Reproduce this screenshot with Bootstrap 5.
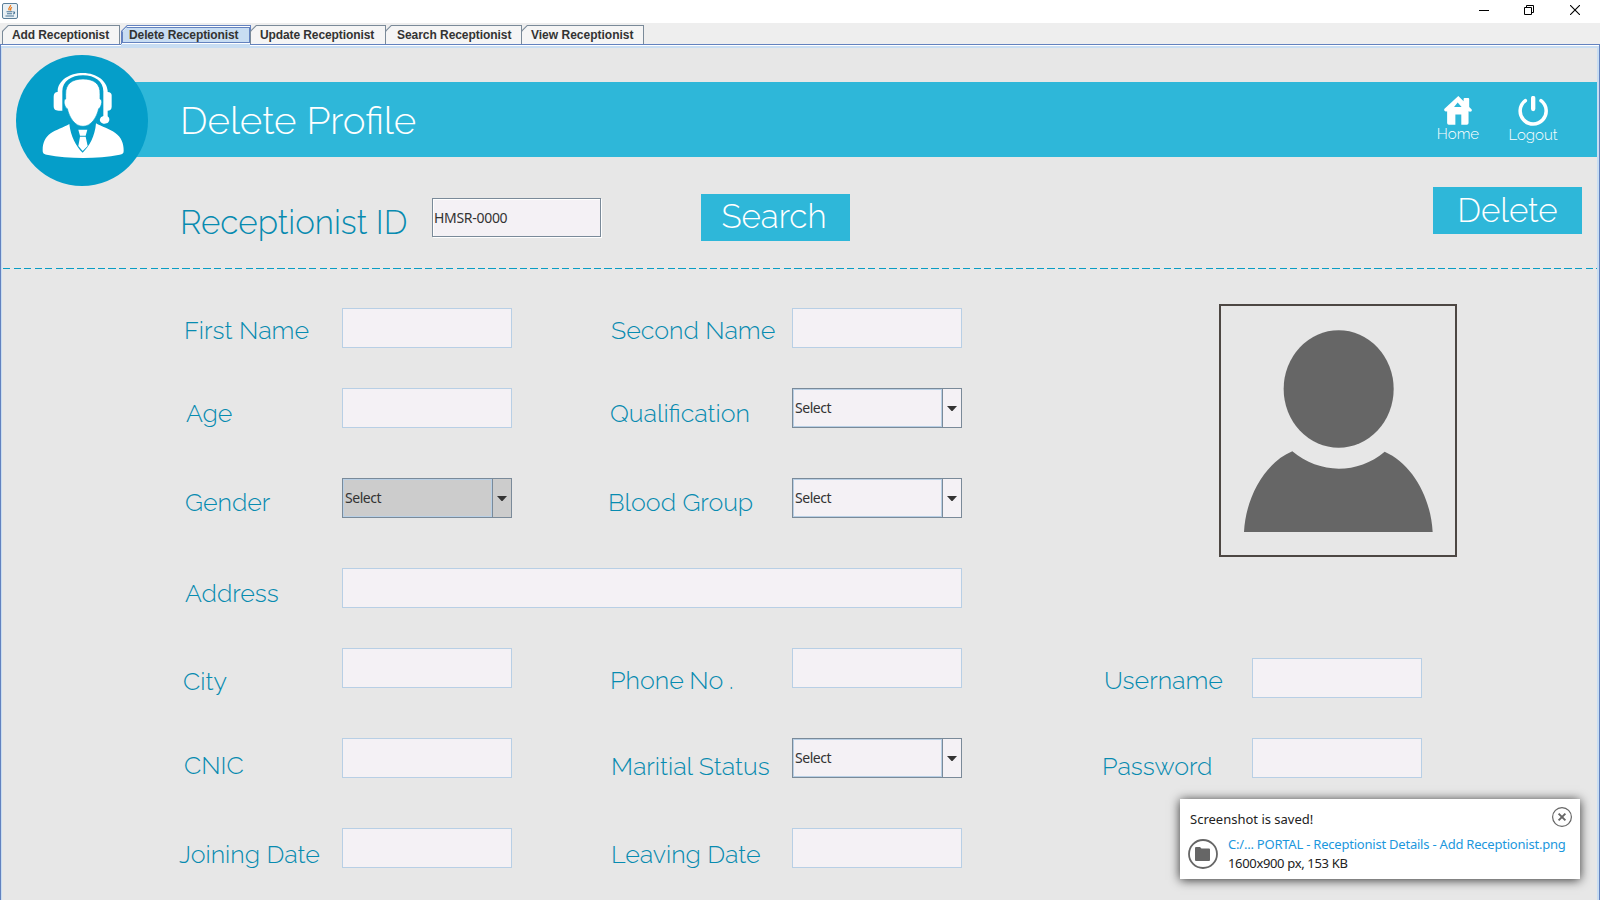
<!DOCTYPE html>
<html lang="en">
<head>
<meta charset="utf-8">
<title>Delete Receptionist</title>
<meta name="viewport" content="width=device-width, initial-scale=1">
<link rel="stylesheet" href="https://cdn.jsdelivr.net/npm/bootstrap@5.3.0/dist/css/bootstrap.min.css">
<style>
:root{--line:#6382bf;--pale:#c8ddf2;--steel:#7a8a99;--teal:#2eb7d9;--ink:#078bb0}
body{width:1600px;height:900px;overflow:hidden;background:#eee;font-family:"Noto Sans",sans-serif;color:#333}
.titlebar{height:23px;background:#fff;padding:3px 0 0 2px}
.winbtns{gap:35px;padding:2px 20px 0 0}
.winbtns svg,.titlebar svg{display:block}
.winbtns .x{margin-left:1px}

/* tab strip */
.tabstrip{height:21px;padding:2px 0 0 2px;flex-wrap:nowrap;border:0}
.tabstrip .nav-link{position:relative;height:19px;margin:0 -1px 0 0;border:0;border-radius:0;padding:0 0 0 10px;font:700 12px/20px "Liberation Sans",Arial,sans-serif;color:#333;white-space:nowrap;background:var(--steel);clip-path:polygon(0 6px,6px 0,100% 0,100% 100%,0 100%);isolation:isolate;letter-spacing:-.1px}
.tabstrip .nav-link::before{content:"";position:absolute;inset:1px 1px 0 1px;background:#f5f5f5;clip-path:polygon(0 5.5px,5.5px 0,100% 0,100% 100%,0 100%);z-index:-1}
.tabstrip .t-add{width:118px}
.tabstrip .t-del{width:130px;margin-left:2px;padding-left:8px}
.tabstrip .t-upd{width:136px}
.tabstrip .t-sea{width:137px;padding-left:12px;letter-spacing:-.05px}
.tabstrip .t-vie{width:123px;letter-spacing:0}
.tabstrip .nav-link.active{background:var(--line);color:#333}
.tabstrip .nav-link.active::before{background:#fff}
.tabstrip .nav-link.active::after{content:"";position:absolute;inset:2px 1px 1px 1px;border:1px solid var(--line);background:var(--pale);clip-path:polygon(0 5px,5px 0,100% 0,100% 100%,0 100%);z-index:-1}

/* tab content frame */
.frame{position:relative;height:856px;background:#e7e7e7;border-left:1px solid var(--line);border-top:1px solid var(--line);border-right:1px solid var(--line);box-shadow:inset 0 1px 0 #fff,inset 1px 3px 0 var(--pale),inset -2px 0 0 var(--pale);padding:3px 2px 0 1px}
.frame .joint{position:absolute;left:120px;top:-1px;width:129px;height:3px;background:var(--pale)}

.band{height:75px;margin:34px 0 0 80px;background:var(--teal);padding:0 39px 0 98px}
.agent{position:absolute;left:15px;top:10px}
.thin{font-family:Raleway,Lato,sans-serif;font-weight:300;white-space:nowrap}
.band h1{font-size:38.5px;line-height:78px;color:#fff}
.tool{color:#fff;font-size:15px;line-height:18px;padding-top:14px;text-decoration:none}
.tool:hover{color:#fff}
.tool svg{display:block;margin:0 auto}
.tool.home{width:44px;margin-right:28px}
.tool.out{width:50px}

.lookup{height:111px;padding-left:178px}
.lookup .rid{width:252px;margin-top:46px;font-size:33.2px;line-height:40px;color:var(--ink)}
.lookup input{width:169px;height:39px;margin:41px 100px 0 0;border:1px solid var(--steel);border-radius:0;padding:0 0 0 1px;background:#f4f1f5;font-size:14px;letter-spacing:-.3px;color:#333;box-shadow:1px 1px 0 #fff,inset 1px 1px 0 #fff}
.cmd{border:0;border-radius:0;padding:0;height:47px;width:149px;background:var(--teal);color:#fff;font-size:33.2px;display:block;text-align:center}
.cmd.go{margin-top:37px;line-height:40px;padding:0 3px 2px 0}
.cmd.del{margin:30px 15px 0 auto;line-height:47px}
.dashes{height:1px;margin-left:1px;background:repeating-linear-gradient(90deg,#0a9dc4 0 7.3px,transparent 7.3px 10.55px)}

/* profile form */
.profile{margin:39px 0 0 177px;grid-template-columns:163px 170px 97px 183px 170px 139px 151px 170px;grid-template-rows:80px 90px 90px 80px 90px 90px 62px;align-items:start}
.profile label{font-size:25px;line-height:28px;color:var(--ink)}
.profile input,.pick{height:40px;border-radius:0;background:#f4f1f5;border:1px solid #b8cfe5;padding:0}
.profile .drop{margin-top:10px}
.pick{border-color:var(--steel);display:flex;font-size:14px;line-height:37px;letter-spacing:-.45px}
.pick .val{width:149px;padding-left:1px;border:1px solid #b8cfe5;line-height:36px;box-shadow:1px 0 0 var(--steel)}
.pick svg{display:block;margin:17px 0 0 5px}
.pick.dim{background:#ccc}
.c1{grid-column:1}.c2{grid-column:2}.c4{grid-column:4}.c5{grid-column:5}.c7{grid-column:7}.c8{grid-column:8}
.wide{grid-column:2/6}
.r1{grid-row:1}.r2{grid-row:2}.r3{grid-row:3}.r4{grid-row:4}.r5{grid-row:5}.r6{grid-row:6}.r7{grid-row:7}
.photo{grid-column:7/9;grid-row:1/4;width:238px;height:253px;margin:-4px 0 0 118px;border:2px solid #4d4743}
#l-first{margin:8px 0 0 5px}
#l-age{margin:11px 0 0 7px}
#l-gender{margin:10px 0 0 6px}
#l-address{margin:11px 0 0 6px}
#l-city{margin:19px 0 0 4px}
#l-cnic{margin:13px 0 0 5px}
#l-join{margin:12px 0 0 0}
#l-second{margin:8px 0 0 2px}
#l-qual{margin:11px 0 0 1px}
#l-blood{margin:10px 0 0 -1px}
#l-phone{margin:18px 0 0 1px;word-spacing:-.8px}
#l-marital{margin:14px 0 0 2px}
#l-leave{margin:12px 0 0 2px}
#l-user{margin:18px 0 0 3px}
#l-pass{margin:14px 0 0 1px}

/* saved-file notice */
.notice{position:absolute;left:1180px;top:799px;width:400px;height:80px;background:#fff;box-shadow:0 1px 10px rgba(0,0,0,.8);font-size:13px;line-height:19px;color:#222;padding:11px 8px 0 10px}
.notice .shut{margin:-3px 0 0}
.notice .dir{margin:2px 10px 0 -2px}
.notice .lines{margin-top:-2px}
.notice a{color:#1c97dd;text-decoration:none;letter-spacing:-.22px;white-space:nowrap}
.notice .meta{letter-spacing:-.34px}
</style>
</head>
<body>
<header class="titlebar d-flex justify-content-between align-items-start">
  <svg width="16" height="16" viewBox="0 0 16 16"><rect x=".5" y=".5" width="15" height="15" rx="1.5" fill="#e9f0f4" stroke="#5b7f99"/><path d="M8.6 2c.6 1.8-3.4 2.6-1.2 5.4M10 4.2C8 5.2 8.3 6 8.8 7.6" fill="none" stroke="#ea7a1c" stroke-width="1.2"/><path d="M4.5 8.8h6M5 10.7h5M3.5 13h8.5M11 9c2.2-.4 2 1.5 0 2" fill="none" stroke="#4a7697" stroke-width="1.1"/></svg>
  <div class="winbtns d-flex" aria-hidden="true">
    <svg width="10" height="10"><path d="M0 5.5h10" stroke="#000"/></svg>
    <svg width="10" height="10" fill="none" stroke="#000"><path d="M.5 2.5h7v7h-7zM2.5 2V.5h7v7H8"/></svg>
    <svg class="x" width="10" height="10" fill="none" stroke="#000" stroke-width="1.1"><path d="M0 0l10 10M10 0L0 10"/></svg>
  </div>
</header>
<nav class="nav nav-tabs tabstrip">
  <a class="nav-link t-add">Add Receptionist</a>
  <a class="nav-link active t-del">Delete Receptionist</a>
  <a class="nav-link t-upd">Update Receptionist</a>
  <a class="nav-link t-sea">Search Receptionist</a>
  <a class="nav-link t-vie">View Receptionist</a>
</nav>
<main class="frame">
  <span class="joint"></span>
  <div class="band d-flex">
    <h1 class="thin m-0 me-auto">Delete Profile</h1>
    <a class="tool home thin text-center" href="#"><svg width="28" height="29" viewBox="132 288 84 88"><path fill="#fff" fill-rule="evenodd" d="M175 288l16 16v-7q0-3 3-3h11q3 0 3 3v24l7 7q2 3 0 6-4 3-9 0v36q0 5-5 5h-17v-31h-18v31h-20q-5 0-5-5v-36q-5 3-8-1-2-3 0-6zM173 308l-11 13h23z"/></svg>Home</a>
    <a class="tool out thin text-center" href="#"><svg width="30" height="30" viewBox="354 288 90 90" fill="none" stroke="#fff" stroke-linecap="round"><path d="M376 302A39 39 0 1 0 423 302" stroke-width="10.5"/><path d="M399.5 294v33" stroke-width="13"/></svg>Logout</a>
  </div>
  <svg class="agent" width="132" height="131" viewBox="48 105 396 393">
    <ellipse cx="246" cy="301.5" rx="198" ry="196.5" fill="#059ec9"/>
    <g fill="#fff">
      <path d="M173 216v-4c2-30 34-53 76-53s72 25 74 53v4c8 0 12 4 12 10v34c0 8-5 12-12 12v17c6 4 7 12 2 18-6 6-18 6-23-1-5-6-2-15 8-18v-74c0-30-26-48-61-48s-62 18-62 48v58h-11c-11 0-15-5-15-14v-28c0-9 4-14 12-14z"/>
      <path d="M249 177c32 0 53 14 51 46v14c6 1 6 10 4 16-2 8-5 12-8 13-6 26-22 53-47 53s-41-27-47-53c-4-1-7-7-9-15-1-6-1-13 4-14v-14c-1-32 20-46 52-46z" stroke="#059ec9" stroke-width="2"/>
      <path d="M208 312c4 36 20 68 40 86 20-18 37-50 40-88 16 9 42 18 58 29 18 13 25 31 25 53 0 8-3 10-12 12-68 13-151 13-219 0-10-2-12-5-12-14 0-22 8-38 24-50 15-11 40-18 56-28z"/>
      <path d="M235 329h27l-5 18h-17zM240 350h17l6 28-15 15-13-15z"/>
    </g>
  </svg>

  <div class="lookup d-flex align-items-start">
    <label class="rid thin" for="rid">Receptionist ID</label>
    <input id="rid" class="form-control flex-shrink-0" value="HMSR-0000">
    <button class="cmd go thin">Search</button>
    <button class="cmd del thin">Delete</button>
  </div>
  <div class="dashes"></div>

  <form class="profile d-grid">
    <label id="l-first" class="thin c1 r1">First Name</label><input class="form-control c2 r1">
    <label id="l-second" class="thin c4 r1">Second Name</label><input class="form-control c5 r1">
    <label id="l-age" class="thin c1 r2">Age</label><input class="form-control c2 r2">
    <label id="l-qual" class="thin c4 r2">Qualification</label>
    <div class="pick c5 r2"><span class="val">Select</span><svg width="10" height="5"><path d="M0 0h10L5.5 5h-1z" fill="#333"/></svg></div>
    <label id="l-gender" class="thin c1 r3">Gender</label>
    <div class="pick dim c2 r3"><span class="val">Select</span><svg width="10" height="5"><path d="M0 0h10L5.5 5h-1z" fill="#333"/></svg></div>
    <label id="l-blood" class="thin c4 r3">Blood Group</label>
    <div class="pick c5 r3"><span class="val">Select</span><svg width="10" height="5"><path d="M0 0h10L5.5 5h-1z" fill="#333"/></svg></div>
    <label id="l-address" class="thin c1 r4">Address</label><input class="form-control wide r4">
    <label id="l-city" class="thin c1 r5">City</label><input class="form-control c2 r5">
    <label id="l-phone" class="thin c4 r5">Phone No .</label><input class="form-control c5 r5">
    <label id="l-user" class="thin c7 r5">Username</label><input class="form-control drop c8 r5">
    <label id="l-cnic" class="thin c1 r6">CNIC</label><input class="form-control c2 r6">
    <label id="l-marital" class="thin c4 r6">Maritial Status</label>
    <div class="pick c5 r6"><span class="val">Select</span><svg width="10" height="5"><path d="M0 0h10L5.5 5h-1z" fill="#333"/></svg></div>
    <label id="l-pass" class="thin c7 r6">Password</label><input class="form-control c8 r6">
    <label id="l-join" class="thin c1 r7">Joining Date</label><input class="form-control c2 r7">
    <label id="l-leave" class="thin c4 r7">Leaving Date</label><input class="form-control c5 r7">
    <div class="photo"><svg class="d-block" width="234" height="249" viewBox="63 48 702 747" fill="#666"><ellipse cx="416" cy="297" rx="165" ry="176"/><path d="M132 726C138 616 198 516 277 484 358 553 474 553 554 485 634 520 692 618 698 726z"/></svg></div>
  </form>
</main>

<aside class="notice">
  <div class="d-flex justify-content-between align-items-start">
    <span>Screenshot is saved!</span>
    <svg class="shut" width="20" height="20" viewBox="0 0 20 20" fill="none" stroke="#666"><circle cx="10" cy="10" r="9.4" stroke-width="1.2"/><path d="M6.6 6.6l6.8 6.8M13.4 6.6l-6.8 6.8" stroke-width="1.9"/></svg>
  </div>
  <div class="d-flex align-items-start mt-2">
    <svg class="dir flex-shrink-0" width="30" height="30" viewBox="0 0 30 30"><circle cx="15" cy="15" r="14" fill="none" stroke="#666" stroke-width="1.8"/><path d="M7 9q0-1 1-1h4l1.5 1.5H21q1 0 1 1V21q0 1-1 1H8q-1 0-1-1z" fill="#666"/></svg>
    <div class="lines"><a href="#">C:/... PORTAL - Receptionist Details - Add Receptionist.png</a><div class="meta">1600x900 px, 153 KB</div></div>
  </div>
</aside>
<script src="https://cdn.jsdelivr.net/npm/bootstrap@5.3.0/dist/js/bootstrap.bundle.min.js"></script>
</body>
</html>
